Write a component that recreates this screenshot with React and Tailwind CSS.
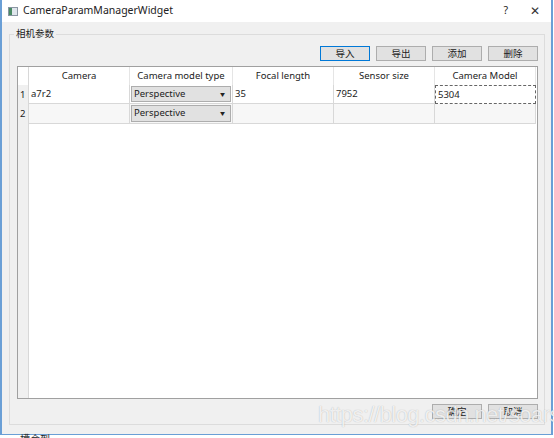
import React from 'react';

const FONT = { fontFamily: '"Noto Sans", "Noto Sans CJK SC", sans-serif' };

/* ── Push button ───────────────────────────────────────────── */
function Btn({ label, focused }) {
  return (
    <button
      className={
        'w-[50px] h-[15px] flex items-center justify-center text-[9.5px] leading-none text-[#222] bg-[#e1e1e1] border ' +
        (focused ? 'border-[#0078d7]' : 'border-[#adadad]')
      }
    >
      {label}
    </button>
  );
}

/* ── Combo box in cell ─────────────────────────────────────── */
function Combo() {
  return (
    <div className="h-full w-full flex items-center justify-between bg-[#e1e1e1] border border-[#adadad] pl-[2px] pr-[5px] text-[9.5px] text-[#222]">
      <span>Perspective</span>
      <span className="text-[5px] leading-none">▼</span>
    </div>
  );
}

const COLS = 'grid-cols-[11px_101px_103px_101px_101px_101px_1fr]';
const HEADERS = ['Camera', 'Camera model type', 'Focal length', 'Sensor size', 'Camera Model'];

export default function App() {
  return (
    <div className="relative w-[554px] h-[438px] bg-white overflow-hidden" style={FONT}>
      <div className="w-[553px] h-[435px] flex flex-col border-l-2 border-r-2 border-b border-[#6a9fd6]">

        {/* title bar */}
        <div className="h-[22px] bg-white flex items-center pl-[6px] pr-[11px] shrink-0">
          <div className="w-[10px] h-[9px] border border-[#8a96a3] bg-[#dfe6ec] flex">
            <div className="w-[3px] h-full bg-[#4a8a64]" />
          </div>
          <span className="ml-[5px] text-[10.5px] text-[#222]">CameraParamManagerWidget</span>
          <span className="ml-auto text-[10.5px] text-[#222]">?</span>
          <span className="ml-[22px] text-[12px] leading-none text-[#333]">✕</span>
        </div>

        {/* body */}
        <div className="flex-1 bg-[#f0f0f0] pt-[12px] pl-[7px]">
          <div className="relative w-[536px] h-[391px] border border-[#dcdcdc] pl-[7px] pr-[6px] pt-[11px] flex flex-col">
            <span className="absolute -top-[8px] left-[4px] px-[2px] bg-[#f0f0f0] text-[9.5px] text-[#222]">相机参数</span>

            <div className="flex justify-end gap-[6px]">
              <Btn label="导入" focused />
              <Btn label="导出" />
              <Btn label="添加" />
              <Btn label="删除" />
            </div>

            {/* table */}
            <div className="mt-[5px] h-[333px] border border-[#a0a0a0] bg-white flex flex-col text-[9.5px] text-[#222]">
              <div className={`grid ${COLS} h-[18px] shrink-0`}>
                <div className="bg-white border-r border-[#d8d8d8]" />
                {HEADERS.map(h => (
                  <div key={h} className="flex items-center justify-center border-r border-[#e5e5e5]">{h}</div>
                ))}
                <div />
              </div>

              <div className={`grid ${COLS} h-[19px] shrink-0`}>
                <div className="bg-[#f0f0f0] border-r border-[#d8d8d8] flex items-center pl-[2px]">1</div>
                <div className="flex items-center pl-[2px] border-r border-b border-[#d8d8d8]">a7r2</div>
                <div className="border-r border-b border-[#d8d8d8] p-[1px]"><Combo /></div>
                <div className="flex items-center pl-[2px] border-r border-b border-[#d8d8d8]">35</div>
                <div className="flex items-center pl-[2px] border-r border-b border-[#d8d8d8]">7952</div>
                <div className="flex items-center pl-[2px] border border-dashed border-[#666]">5304</div>
                <div />
              </div>

              <div className={`grid ${COLS} h-[20px] shrink-0`}>
                <div className="bg-[#f0f0f0] border-r border-[#d8d8d8] flex items-center pl-[2px]">2</div>
                <div className="bg-[#f7f7f7] border-r border-b border-[#d8d8d8]" />
                <div className="bg-[#f7f7f7] border-r border-b border-[#d8d8d8] p-[1px]"><Combo /></div>
                <div className="bg-[#f7f7f7] border-r border-b border-[#d8d8d8]" />
                <div className="bg-[#f7f7f7] border-r border-b border-[#d8d8d8]" />
                <div className="bg-[#f7f7f7] border-r border-b border-[#d8d8d8]" />
                <div />
              </div>

              <div className="flex-1 flex">
                <div className="w-[11px] bg-[#f0f0f0] border-r border-[#d8d8d8]" />
              </div>
            </div>

            <div className="mt-[5px] flex justify-end gap-[6px]">
              <Btn label="确定" />
              <Btn label="取消" />
            </div>
          </div>
        </div>
      </div>

      {/* watermark */}
      <span
        className="absolute left-[318px] top-[398px] text-[22px] text-white/80 tracking-tight pointer-events-none"
        style={{ fontFamily: '"Liberation Sans", sans-serif', textShadow: '0 0 1px rgba(0,0,0,0.3)' }}
      >
        https://blog.csdn.net/soarscape
      </span>

      {/* cut-off text below window */}
      <span className="absolute left-[20px] top-[432px] text-[10px] text-[#222]">槽合到</span>
    </div>
  );
}
